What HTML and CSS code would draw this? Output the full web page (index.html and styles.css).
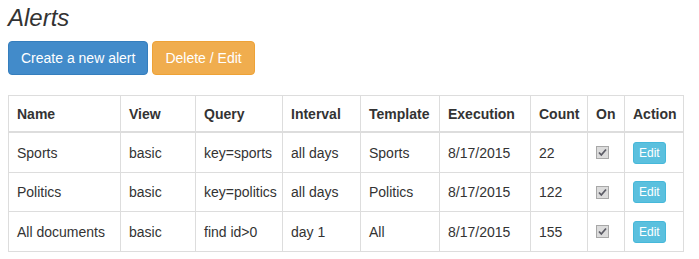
FILE: index.html
```html
<!DOCTYPE html>
<html>
<head>
<meta charset="utf-8">
<link rel="stylesheet" href="styles.css">
</head>
<body>
<div class="page">
  <h3 class="title">Alerts</h3>
  <div class="toolbar">
    <button class="btn btn-primary">Create a new alert</button>
    <button class="btn btn-warning">Delete / Edit</button>
  </div>
  <table class="alerts">
    <colgroup>
      <col class="c-name"><col class="c-view"><col class="c-query"><col class="c-interval"><col class="c-template"><col class="c-exec"><col class="c-count"><col class="c-on"><col class="c-action">
    </colgroup>
    <thead>
      <tr><th>Name</th><th>View</th><th>Query</th><th>Interval</th><th>Template</th><th>Execution</th><th>Count</th><th>On</th><th>Action</th></tr>
    </thead>
    <tbody>
      <tr><td>Sports</td><td>basic</td><td>key=sports</td><td>all days</td><td>Sports</td><td>8/17/2015</td><td>22</td><td><svg class="chk" width="13" height="13" viewBox="0 0 13 13"><rect x="0.5" y="0.5" width="12" height="12" fill="#dcdcdc" stroke="#a8a8a8"/><path d="M3 6.5 L5.3 9 L10 3.5" fill="none" stroke="#5c5c66" stroke-width="1.8"/></svg></td><td><button class="btn-xs">Edit</button></td></tr>
      <tr><td>Politics</td><td>basic</td><td><span class="clip">key=politics</span></td><td>all days</td><td>Politics</td><td>8/17/2015</td><td>122</td><td><svg class="chk" width="13" height="13" viewBox="0 0 13 13"><rect x="0.5" y="0.5" width="12" height="12" fill="#dcdcdc" stroke="#a8a8a8"/><path d="M3 6.5 L5.3 9 L10 3.5" fill="none" stroke="#5c5c66" stroke-width="1.8"/></svg></td><td><button class="btn-xs">Edit</button></td></tr>
      <tr><td>All documents</td><td>basic</td><td>find id&gt;0</td><td>day 1</td><td>All</td><td>8/17/2015</td><td>155</td><td><svg class="chk" width="13" height="13" viewBox="0 0 13 13"><rect x="0.5" y="0.5" width="12" height="12" fill="#dcdcdc" stroke="#a8a8a8"/><path d="M3 6.5 L5.3 9 L10 3.5" fill="none" stroke="#5c5c66" stroke-width="1.8"/></svg></td><td><button class="btn-xs">Edit</button></td></tr>
    </tbody>
  </table>
</div>
</body>
</html>
```
FILE: styles.css
```css
html, body {
  margin: 0;
  padding: 0;
  background: #fff;
}
body {
  font-family: "Liberation Sans", Arial, Helvetica, sans-serif;
  font-size: 14px;
  line-height: 20px;
  color: #333;
}
.page {
  padding: 0 8px;
}
.title {
  margin: 5px 0 10px 0;
  font-size: 24px;
  line-height: 26px;
  font-weight: 500;
  font-style: italic;
  color: #333;
}
.toolbar {
  display: flex;
  gap: 4px;
  margin-bottom: 20px;
}
.btn {
  font-family: inherit;
  font-size: 14px;
  line-height: 20px;
  padding: 6px 12px;
  border: 1px solid transparent;
  border-radius: 4px;
  color: #fff;
  cursor: pointer;
}
.btn-primary {
  background: #428bca;
  border-color: #357ebd;
}
.btn-warning {
  background: #f0ad4e;
  border-color: #eea236;
}
.alerts {
  border-collapse: collapse;
  table-layout: fixed;
  width: 675px;
  border: 1px solid #ddd;
}
.c-name { width: 112px; }
.c-view { width: 75px; }
.c-query { width: 87px; }
.c-interval { width: 78px; }
.c-template { width: 79px; }
.c-exec { width: 91px; }
.c-count { width: 57px; }
.c-on { width: 37px; }
.c-action { width: 59px; }
.alerts th, .alerts td {
  border: 1px solid #ddd;
  text-align: left;
  white-space: nowrap;
  overflow: hidden;
  vertical-align: middle;
  padding: 0 8px;
}
.alerts th {
  font-weight: bold;
  height: 35px;
  border-bottom: 2px solid #ddd;
}
.alerts td {
  height: 39px;
}
.alerts tbody tr:nth-child(2) td {
  height: 38px;
}
.clip {
  display: block;
  width: 73px;
  overflow: hidden;
}
.chk {
  display: block;
}
.btn-xs {
  font-family: inherit;
  font-size: 12px;
  line-height: 18px;
  padding: 1px 5px;
  border: 1px solid #46b8da;
  border-radius: 3px;
  background: #5bc0de;
  color: #fff;
  display: block;
}
```
